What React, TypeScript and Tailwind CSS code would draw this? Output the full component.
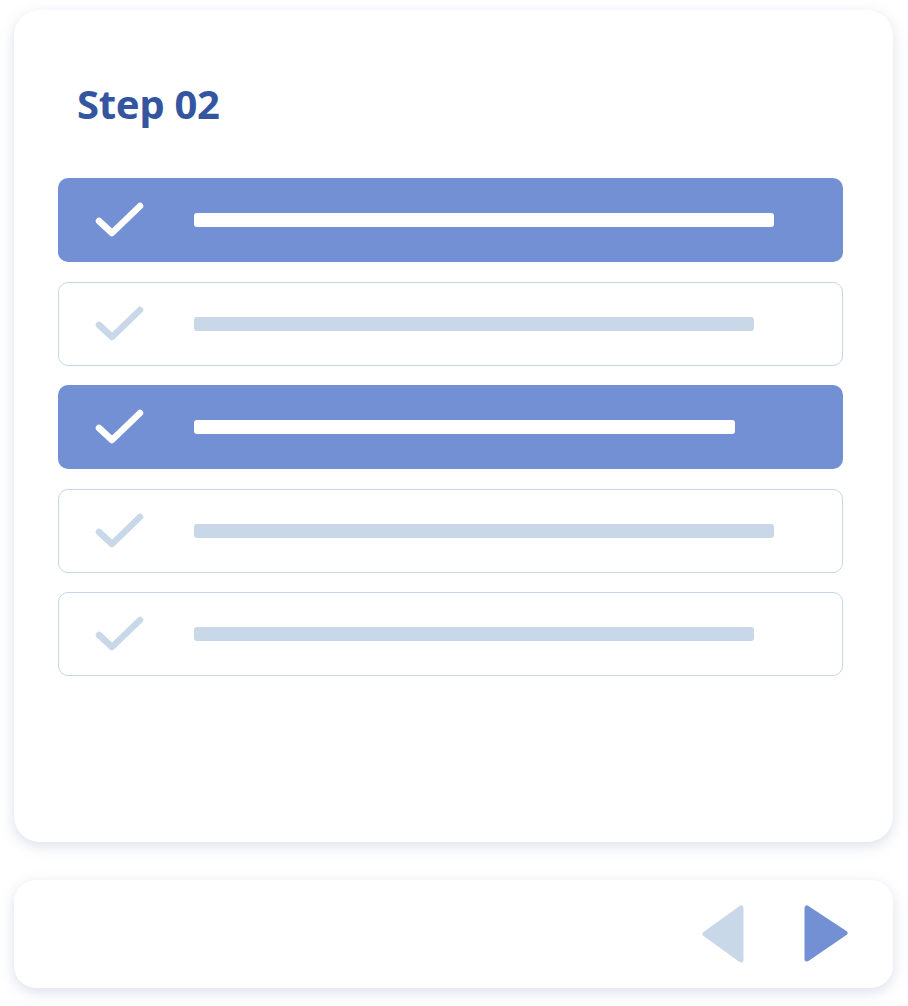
import React from "react";

const rows = [
  { active: true, bar: 580 },
  { active: false, bar: 560 },
  { active: true, bar: 541 },
  { active: false, bar: 580 },
  { active: false, bar: 560 },
];

const Check: React.FC<{ color: string }> = ({ color }) => (
  <svg width="50" height="36" viewBox="0 0 50 36" className="shrink-0">
    <path
      d="M4 19 L17 31 L45 4"
      fill="none"
      stroke={color}
      strokeWidth="6.5"
      strokeLinecap="round"
      strokeLinejoin="round"
    />
  </svg>
);

const App: React.FC = () => {
  return (
    <div className="w-[908px] h-[1006px] bg-white pt-[10px] pl-[14px]" style={{ fontFamily: '"Noto Sans", "Open Sans", sans-serif' }}>
      {/* main card */}
      <div className="w-[879px] h-[832px] rounded-[26px] bg-white shadow-[0_4px_14px_rgba(180,185,210,0.45)] pt-[74px]">
        <h1 className="pl-[63px] text-[40px] leading-[40px] font-bold tracking-[-0.3px] text-[#3455a0]">Step 02</h1>

        <div className="ml-[44px] w-[785px] mt-[54px] flex flex-col gap-[19.5px]">
          {rows.map((r, i) => (
            <div
              key={i}
              className={
                r.active
                  ? "h-[84px] rounded-[10px] bg-[#7290d3] flex items-center pl-[37px]"
                  : "h-[84px] rounded-[10px] bg-white border-[1.5px] border-[#c6d6ea] flex items-center pl-[36px]"
              }
            >
              <Check color={r.active ? "#ffffff" : "#c9d8e9"} />
              <div
                className={r.active ? "ml-[49px] h-[14px] rounded-[3px] bg-white" : "ml-[49px] h-[14px] rounded-[3px] bg-[#c9d8e9]"}
                style={{ width: r.bar }}
              />
            </div>
          ))}
        </div>
      </div>

      {/* footer card with arrows */}
      <div className="mt-[38px] w-[879px] h-[108px] rounded-[22px] bg-white shadow-[0_4px_14px_rgba(180,185,210,0.45)] flex items-center justify-end pr-[45px] gap-[60px]">
        <svg width="42" height="58" viewBox="0 0 42 58">
          <path d="M39 3 L39 55 L3 29 Z" fill="#c9d8e9" stroke="#c9d8e9" strokeWidth="5" strokeLinejoin="round" />
        </svg>
        <svg width="44" height="58" viewBox="0 0 44 58">
          <path d="M3 3 L3 54 L41 28 Z" fill="#7290d3" stroke="#7290d3" strokeWidth="5" strokeLinejoin="round" />
        </svg>
      </div>
    </div>
  );
};

export default App;
